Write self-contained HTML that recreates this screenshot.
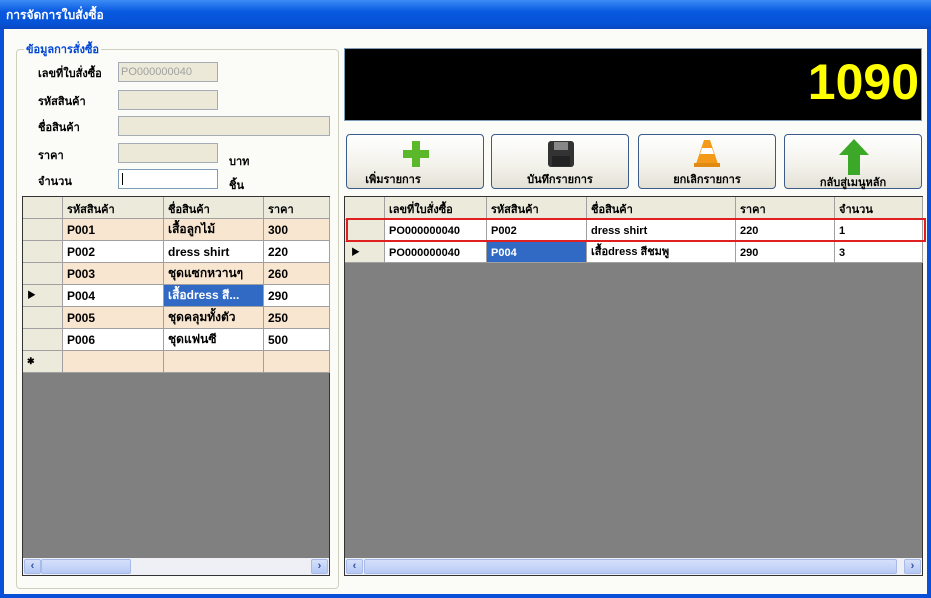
<!DOCTYPE html>
<html><head><meta charset="utf-8"><style>
*{margin:0;padding:0;box-sizing:border-box}
body{width:931px;height:598px;overflow:hidden;background:#0a4fd8;font-family:"Liberation Sans","Noto Sans CJK SC",sans-serif;font-size:11px;font-weight:bold;position:relative;line-height:13px}
.a{position:absolute;white-space:nowrap}
.title{left:0;top:0;width:931px;height:29px;background:linear-gradient(#3d8cf5,#0859e0 40%,#0653d6 80%,#0a47c0);color:#fff;font-size:12px;padding:9px 0 0 6px}
.body{left:4px;top:29px;width:923px;height:565px;background:#fbfbf7}
.grp{left:16px;top:49px;width:323px;height:540px;border:1px solid #d0d0bf;border-radius:4px}
.gl{left:24px;top:44px;background:#fbfbf7;color:#0046d5;padding:0 2px;font-size:11px}
.lbl{color:#000;font-size:11px}
.tb{border:1px solid #a5acb5;background:#ece9d8;height:20px}
.grid{background:#808080;border:1px solid #333}
.cell{position:absolute;border-right:1px solid #a0a0a0;border-bottom:1px solid #a0a0a0;padding:4px 0 0 4px;font-size:12px;line-height:14px;white-space:nowrap;overflow:hidden;height:22px}
.h{background:#ebeadb;font-weight:bold;font-size:11px;color:#000;padding-top:6px}
.btn{top:134px;width:138px;height:55px;border:1px solid #3c5a8a;border-radius:4px;background:linear-gradient(#fff,#f2f1ea 60%,#e3e1d6);font-size:11px}
.btn .t{position:absolute;left:0;width:136px;text-align:center}
.sb{height:17px;background:#eef0f6}
.thumb{background:linear-gradient(#d5e0fa,#b9cbf5);border:1px solid #a8bbe8;border-radius:2px;height:15px;top:1px}
.arr{width:17px;height:15px;top:1px;background:linear-gradient(#d5e0fa,#b4c8f4);border:1px solid #a8bbe8;border-radius:2px;color:#3050a0;font-size:11px;text-align:center;line-height:13px;padding:0}
</style></head><body>
<div class="a title">การจัดการใบสั่งซื้อ</div>
<div class="a body"></div>
<div class="a grp"></div>
<div class="a gl">ข้อมูลการสั่งซื้อ</div>
<div class="a lbl" style="left:38px;top:68px">เลขที่ใบสั่งซื้อ</div>
<div class="a lbl" style="left:38px;top:96px">รหัสสินค้า</div>
<div class="a lbl" style="left:38px;top:122px">ชื่อสินค้า</div>
<div class="a lbl" style="left:38px;top:150px">ราคา</div>
<div class="a lbl" style="left:38px;top:176px">จำนวน</div>
<div class="a tb" style="left:118px;top:62px;width:100px;color:#a0a0a0;font-weight:normal;padding:3px 2px;font-size:11px">PO000000040</div>
<div class="a tb" style="left:118px;top:90px;width:100px"></div>
<div class="a tb" style="left:118px;top:116px;width:212px"></div>
<div class="a tb" style="left:118px;top:143px;width:100px"></div>
<div class="a tb" style="left:118px;top:169px;width:100px;background:#fff;border-color:#7f9db9"><div class="a" style="left:3px;top:3px;width:1px;height:12px;background:#000"></div></div>
<div class="a lbl" style="left:229px;top:156px">บาท</div>
<div class="a lbl" style="left:229px;top:180px">ชิ้น</div>

<div class="a grid" style="left:22px;top:196px;width:308px;height:380px">
<div class="cell h" style="left:0;top:0;width:40px"></div>
<div class="cell h" style="left:40px;top:0;width:101px">รหัสสินค้า</div>
<div class="cell h" style="left:141px;top:0;width:100px">ชื่อสินค้า</div>
<div class="cell h" style="left:241px;top:0;width:66px">ราคา</div>
</div>
<div class="a" id="lrows" style="left:23px;top:219px"></div>
<div class="a sb" style="left:23px;top:558px;width:306px"></div>
<div class="a arr" style="left:24px;top:559px">‹</div>
<div class="a thumb" style="left:41px;top:559px;width:90px"></div>
<div class="a arr" style="left:311px;top:559px">›</div>

<div class="a" style="left:344px;top:48px;width:578px;height:73px;background:#000;border:1px solid #7f9db9"></div>
<div class="a" style="right:12px;top:54px;color:#ffff00;font-size:50px;font-weight:bold;line-height:56px">1090</div>

<div class="a btn" style="left:346px"><svg width="30" height="30" viewBox="0 0 30 30" style="position:absolute;left:54px;top:4px"><path d="M11 2h8v9h9v8h-9v9h-8v-9H2v-8h9z" fill="#5bb82a"/></svg><div class="t" style="top:39px;left:-22px">เพิ่มรายการ</div></div>
<div class="a btn" style="left:491px"><svg width="28" height="28" viewBox="0 0 28 28" style="position:absolute;left:55px;top:5px"><rect x="1" y="1" width="26" height="26" rx="3" fill="#333"/><rect x="7" y="2" width="14" height="8" fill="#888"/><rect x="5" y="16" width="18" height="10" fill="#222"/></svg><div class="t" style="top:39px">บันทึกรายการ</div></div>
<div class="a btn" style="left:638px"><svg width="30" height="30" viewBox="0 0 30 30" style="position:absolute;left:53px;top:3px"><path d="M12 2h6l8 24H4z" fill="#f39a1a"/><path d="M10 10h10l2 6H8z" fill="#fff"/><rect x="2" y="25" width="26" height="4" fill="#e08a10"/></svg><div class="t" style="top:39px">ยกเลิกรายการ</div></div>
<div class="a btn" style="left:784px"><svg width="34" height="38" viewBox="0 0 34 38" style="position:absolute;left:52px;top:3px"><path d="M17 1L2 17h9v20h12V17h9z" fill="#3ca828"/></svg><div class="t" style="top:42px">กลับสู่เมนูหลัก</div></div>

<div class="a grid" style="left:344px;top:196px;width:579px;height:380px">
<div class="cell h" style="left:0;top:0;width:40px;height:23px"></div>
<div class="cell h" style="left:40px;top:0;width:102px;height:23px">เลขที่ใบสั่งซื้อ</div>
<div class="cell h" style="left:142px;top:0;width:100px;height:23px">รหัสสินค้า</div>
<div class="cell h" style="left:242px;top:0;width:149px;height:23px">ชื่อสินค้า</div>
<div class="cell h" style="left:391px;top:0;width:99px;height:23px">ราคา</div>
<div class="cell h" style="left:490px;top:0;width:88px;height:23px">จำนวน</div>
<div class="cell h" style="left:0;top:23px;width:40px"></div>
<div class="cell" style="left:40px;top:23px;width:102px;background:#fff;font-size:11px">PO000000040</div>
<div class="cell" style="left:142px;top:23px;width:100px;background:#fff;font-size:11px">P002</div>
<div class="cell" style="left:242px;top:23px;width:149px;background:#fff;font-size:11px">dress shirt</div>
<div class="cell" style="left:391px;top:23px;width:99px;background:#fff;font-size:11px">220</div>
<div class="cell" style="left:490px;top:23px;width:88px;background:#fff;font-size:11px">1</div>
<div class="cell h" style="left:0;top:45px;width:40px;height:21px;font-size:9px;padding-left:6px;padding-top:3px">▶</div>
<div class="cell" style="left:40px;top:45px;width:102px;height:21px;background:#fff;font-size:11px">PO000000040</div>
<div class="cell" style="left:142px;top:45px;width:100px;height:21px;background:#316ac5;color:#fff;font-size:11px">P004</div>
<div class="cell" style="left:242px;top:45px;width:149px;height:21px;background:#fff;font-size:11px;padding-top:3px">เสื้อdress สีชมพู</div>
<div class="cell" style="left:391px;top:45px;width:99px;height:21px;background:#fff;font-size:11px">290</div>
<div class="cell" style="left:490px;top:45px;width:88px;height:21px;background:#fff;font-size:11px">3</div>
</div>
<div class="a" style="left:346px;top:218px;width:580px;height:24px;border:2px solid #e02020"></div>
<div class="a sb" style="left:345px;top:558px;width:577px"></div>
<div class="a arr" style="left:346px;top:559px">‹</div>
<div class="a thumb" style="left:364px;top:559px;width:533px"></div>
<div class="a arr" style="left:904px;top:559px">›</div>

<script>
var d=[["P001","เสื้อลูกไม้","300",1],["P002","dress shirt","220",0],["P003","ชุดแซกหวานๆ","260",1],["P004","เสื้อdress สี...","290",0],["P005","ชุดคลุมทั้งตัว","250",1],["P006","ชุดแฟนซี","500",0],["","","",1]];
var h="";
d.forEach(function(r,i){var t=i*22,bg=r[3]?"#f8e6d0":"#fff";
var mk=i==3?"▶":(i==6?"✱":"");
var th=/[\u0E00-\u0E7F]/.test(r[1])?";padding-top:3px":"";
h+='<div class="cell h" style="left:0;top:'+t+'px;width:40px;font-size:9px;padding-left:4px;padding-top:3px">'+mk+'</div>';
h+='<div class="cell" style="left:40px;top:'+t+'px;width:101px;background:'+bg+'">'+r[0]+'</div>';
h+='<div class="cell" style="left:141px;top:'+t+'px;width:100px;background:'+(i==3?"#316ac5;color:#fff":bg)+th+'">'+r[1]+'</div>';
h+='<div class="cell" style="left:241px;top:'+t+'px;width:66px;background:'+bg+'">'+r[2]+'</div>';});
document.getElementById("lrows").innerHTML=h;
</script>
</body></html>
